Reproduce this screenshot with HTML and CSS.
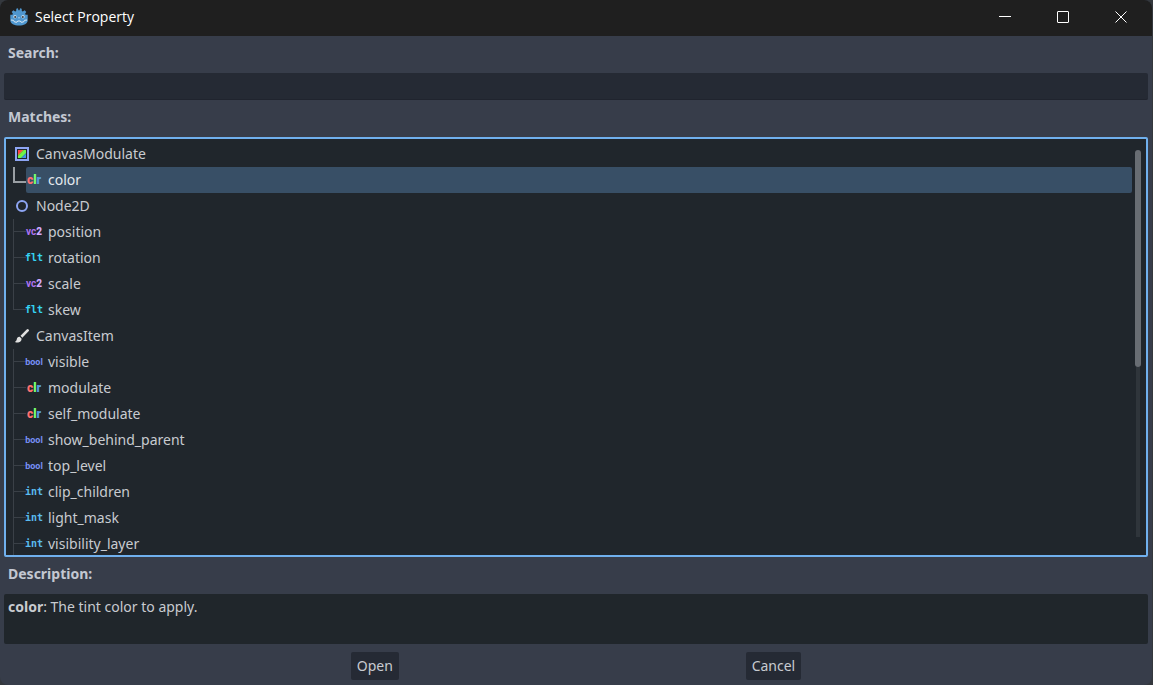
FILE: index.html
```html
<!DOCTYPE html>
<html lang="en">
<head>
<meta charset="utf-8">
<title>Select Property</title>
<link rel="stylesheet" href="styles.css">
</head>
<body>
<main class="dialog">
  <header class="titlebar">
    <svg class="logo" viewBox="0 0 18 18" aria-hidden="true">
      <path fill="#4f97cf" d="M6.300.8 8 .3l.4 2h1.200L10 .3l1.700.5.1 2.200 1 .6 1.900-1.300L16.300 4l-1.200 1.800.5.9h2.100v5.800c0 3-4 5-8.700 5S.3 15.500.3 12.500V6.700h2.100l.5-.9L1.700 4l1.600-1.700 1.900 1.300 1-.6z"/>
      <path fill="none" stroke="#dce9f4" stroke-width="1" d="M1 12l2.500.3 1 1.700 2.500.2.700-1.200h2.600l.7 1.200 2.500-.2 1-1.700 2.500-.3"/>
      <circle cx="5" cy="8.800" r="1.700" fill="#c3dcf0"/><circle cx="13" cy="8.800" r="1.700" fill="#c3dcf0"/>
      <circle cx="5.200" cy="9" r="1" fill="#414042"/><circle cx="12.800" cy="9" r="1" fill="#414042"/>
      <path stroke="#c3dcf0" stroke-width="1" d="M9 9v1.500"/>
    </svg>
    <h1 class="title">Select Property</h1>
    <button class="winbtn" type="button" aria-label="Minimize"><svg viewBox="0 0 12 12"><path d="M0 5.500h12"/></svg></button>
    <button class="winbtn" type="button" aria-label="Maximize"><svg viewBox="0 0 12 12"><rect x=".5" y=".5" width="11" height="11" rx=".5"/></svg></button>
    <button class="winbtn" type="button" aria-label="Close"><svg viewBox="0 0 12 12"><path d="M.5.5l11 11M11.500.5l-11 11"/></svg></button>
  </header>

  <div class="content">
    <label class="label" for="search">Search:</label>
    <input class="search" id="search" type="text">

    <h2 class="label">Matches:</h2>
    <div class="tree">
      <ul class="list">
        <li>
          <div class="row">
            <svg class="icon" viewBox="0 0 16 16" aria-hidden="true">
              <path fill="#8da5f3" d="M1 1h14v14H1z"/><path fill="#20252b" d="M3 3h10v10H3z"/>
              <path fill="#ff4545" d="M4 4h5L4 9z"/><path fill="#ffe345" d="M9 4h1L4 10V9z"/><path fill="#70f545" d="M10 4h2v3l-5 5H4v-2z"/><path fill="#45d7ff" d="M12 7v1l-4 4H7z"/><path fill="#4593ec" d="M12 8v4H8z"/>
            </svg>CanvasModulate
          </div>
          <ul class="group">
            <li class="child active"><span class="guide"></span><span class="cell"><span class="type clr"><b class="red">c</b><b class="green">l</b><b class="blue">r</b></span>color</span></li>
          </ul>
        </li>
        <li>
          <div class="row">
            <svg class="icon" viewBox="0 0 16 16" aria-hidden="true"><circle cx="8" cy="8" r="5" fill="none" stroke="#8da5f3" stroke-width="2"/></svg>Node2D
          </div>
          <ul class="group">
            <li class="child"><span class="guide"></span><span class="cell"><span class="type vec">vc<b class="pale">2</b></span>position</span></li>
            <li class="child"><span class="guide"></span><span class="cell"><span class="type flt">flt</span>rotation</span></li>
            <li class="child"><span class="guide"></span><span class="cell"><span class="type vec">vc<b class="pale">2</b></span>scale</span></li>
            <li class="child"><span class="guide"></span><span class="cell"><span class="type flt">flt</span>skew</span></li>
          </ul>
        </li>
        <li>
          <div class="row">
            <svg class="icon" viewBox="0 0 16 16" aria-hidden="true"><path fill="#e0e0e0" d="M14.600 1.400a1.300 1.300 0 0 0-1.900 0L6.500 7.800l1.800 1.900 6.300-6.400a1.300 1.300 0 0 0 0-1.900zM5.700 8.700c-1.700-.2-2.700 1-2.900 2.500-.2 1.300-.8 1.900-1.800 2.700 1.900 1.200 7 .9 6.500-3.400z"/></svg>CanvasItem
          </div>
          <ul class="group open">
            <li class="child"><span class="guide"></span><span class="cell"><span class="type bool">bool</span>visible</span></li>
            <li class="child"><span class="guide"></span><span class="cell"><span class="type clr"><b class="red">c</b><b class="green">l</b><b class="blue">r</b></span>modulate</span></li>
            <li class="child"><span class="guide"></span><span class="cell"><span class="type clr"><b class="red">c</b><b class="green">l</b><b class="blue">r</b></span>self_modulate</span></li>
            <li class="child"><span class="guide"></span><span class="cell"><span class="type bool">bool</span>show_behind_parent</span></li>
            <li class="child"><span class="guide"></span><span class="cell"><span class="type bool">bool</span>top_level</span></li>
            <li class="child"><span class="guide"></span><span class="cell"><span class="type int">int</span>clip_children</span></li>
            <li class="child"><span class="guide"></span><span class="cell"><span class="type int">int</span>light_mask</span></li>
            <li class="child"><span class="guide"></span><span class="cell"><span class="type int">int</span>visibility_layer</span></li>
          </ul>
        </li>
      </ul>
      <div class="scrollbar"><div class="thumb"></div><div class="track"></div></div>
    </div>

    <h2 class="label">Description:</h2>
    <p class="description"><b>color</b>: The tint color to apply.</p>

    <footer class="actions">
      <button class="button" type="button">Open</button>
      <button class="button" type="button">Cancel</button>
    </footer>
  </div>
</main>
</body>
</html>
```
FILE: styles.css
```css
* { box-sizing: border-box; }
body {
  margin: 0;
  padding-right: 1px;
  background: #34383d;
  color: #c8cbd0;
  font: 14px/26px "Noto Sans", sans-serif;
}
ul { margin: 0; padding: 0; list-style: none; }

.dialog {
  display: flex;
  flex-direction: column;
  height: 100vh;
  overflow: hidden;
  border-radius: 8px;
  background: #373d4a;
}
.titlebar {
  display: flex;
  align-items: center;
  flex: none;
  height: 36px;
  padding: 0 2px 2px 10px;
  background: #1f1f1f;
}
.logo { width: 18px; height: 18px; margin-right: 7px; }
.title {
  flex: 1;
  margin: 0;
  color: #fff;
  font: 14px/26px "Open Sans", sans-serif;
}
.winbtn {
  display: grid;
  place-items: center;
  width: 58px;
  height: 34px;
  padding: 0;
  border: 0;
  background: none;
}
.winbtn svg {
  width: 12px;
  height: 12px;
  fill: none;
  stroke: #fff;
}

.content {
  display: flex;
  flex: 1;
  flex-direction: column;
  min-height: 0;
  padding: 0 4px 5px;
}
.label {
  flex: none;
  margin: 0;
  padding: 4px 4px 7px;
  color: #c3c8d2;
  font-size: 14px;
  font-weight: 700;
}
.search {
  flex: none;
  width: 100%;
  height: 27px;
  padding: 0 4px;
  border: 0;
  border-bottom: 1px solid #20242e;
  border-radius: 2px;
  outline: 0;
  background: #252a34;
  color: inherit;
  font: inherit;
}

.tree {
  display: flex;
  flex: 1;
  min-height: 0;
  overflow: hidden;
  padding-top: 2px;
  border: 2px solid #70b0ee;
  border-radius: 2px;
  background: #20262c;
}
.list { flex: 1; }
.row, .cell {
  display: flex;
  align-items: center;
  gap: 6px;
  height: 26px;
}
.row { padding-left: 8px; }
.icon { width: 16px; height: 16px; }
.child { display: flex; padding-left: 7px; }
.cell { flex: 1; border-radius: 2px; }
.guide { width: 13px; height: 26px; }
.guide::before, .guide::after {
  content: "";
  display: block;
  border-left: 1px solid #3a4047;
}
.guide::before { height: 12px; border-bottom: 1px solid #3a4047; }
.guide::after { height: 14px; }
.group:not(.open) .child:last-child .guide::after { visibility: hidden; }
.active .guide::before { height: 14px; border-color: #9a9fa4; border-width: 0 0 2px 2px; }
.active .cell { background: #384f66; color: #e4e9ee; }

.type {
  display: flex;
  justify-content: center;
  width: 16px;
  font: bold 10px/16px "DejaVu Sans Mono", monospace;
}
.clr { font: bold 12px/16px Roboto, sans-serif; }
.bool { color: #7790f5; font: bold 9px/16px Roboto, sans-serif; }
.int { color: #5abbef; }
.flt { color: #35d4f4; }
.vec { color: #ac73f1; font: bold 10px/16px Roboto, sans-serif; }
.pale { color: #d0aaff; }
.red { color: #ff7070; }
.green { color: #7aff70; }
.blue { color: #559be0; }

.scrollbar {
  display: flex;
  flex-direction: column;
  align-items: center;
  width: 14px;
  padding: 9px 4px 18px 2px;
}
.thumb { flex: 217; width: 6px; border-radius: 3px; background: #686d73; }
.track { flex: 170; width: 4px; background: #2f353b; }

.description {
  flex: none;
  min-height: 50px;
  margin: 0;
  padding: 0 4px;
  border-radius: 2px;
  background: #20262b;
}
.actions {
  display: flex;
  flex: none;
  justify-content: space-evenly;
  padding-top: 8px;
}
.button {
  height: 28px;
  padding: 0 6px;
  border: 0;
  border-radius: 2px;
  background: #252a34;
  color: #c8cbd0;
  font: inherit;
}
```
